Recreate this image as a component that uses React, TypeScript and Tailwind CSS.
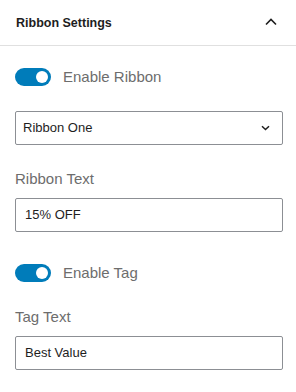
import React from 'react';

const font = { fontFamily: '"Liberation Sans", Arial, sans-serif' };

const Toggle = ({ label }: { label: string }) => (
  <div className="flex items-center h-[18px]">
    <div className="relative w-[36px] h-[18px] rounded-full bg-[#007cba] shrink-0">
      <div className="absolute right-[3px] top-[3px] w-[12px] h-[12px] rounded-full bg-white" />
    </div>
    <span className="ml-[12px] text-[15px] leading-[18px] text-[#6d6d6d]">{label}</span>
  </div>
);

const Field = ({ value }: { value: string }) => (
  <div className="flex items-center h-[34px] border border-[#8c8f94] rounded-[2px] px-[9px] text-[13px] text-[#1e1e1e]">
    {value}
  </div>
);

const Label = ({ text }: { text: string }) => (
  <div className="text-[15px] leading-[20px] text-[#6d6d6d]">{text}</div>
);

export default function App() {
  return (
    <div className="w-[296px] h-[392px] bg-white" style={font}>
      <div className="flex items-center justify-between h-[46px] pl-4 pr-[19px] border-b border-[#e0e0e0]">
        <span className="text-[12.5px] font-bold text-[#1e1e1e] mt-[1px]">Ribbon Settings</span>
        <svg width="12" height="8" viewBox="0 0 12 8" className="-mt-[2px]">
          <path d="M1 6.5 L6 1.5 L11 6.5" fill="none" stroke="#1e1e1e" strokeWidth="1.6" />
        </svg>
      </div>
      <div className="flex flex-col pl-[15px] pr-[13px] pt-[22px]">
        <Toggle label="Enable Ribbon" />
        <div className="mt-[25px] flex items-center justify-between h-[34px] border border-[#8c8f94] rounded-[2px] pl-[7px] pr-[12px] text-[13px] text-[#1e1e1e]">
          <span>Ribbon One</span>
          <svg width="9" height="6" viewBox="0 0 9 6">
            <path d="M1 1.2 L4.5 4.5 L8 1.2" fill="none" stroke="#1e1e1e" strokeWidth="1.5" />
          </svg>
        </div>
        <div className="mt-[24px]">
          <Label text="Ribbon Text" />
        </div>
        <div className="mt-[9px]">
          <Field value="15% OFF" />
        </div>
        <div className="mt-[32px]">
          <Toggle label="Enable Tag" />
        </div>
        <div className="mt-[25px]">
          <Label text="Tag Text" />
        </div>
        <div className="mt-[9px]">
          <Field value="Best Value" />
        </div>
      </div>
    </div>
  );
}
